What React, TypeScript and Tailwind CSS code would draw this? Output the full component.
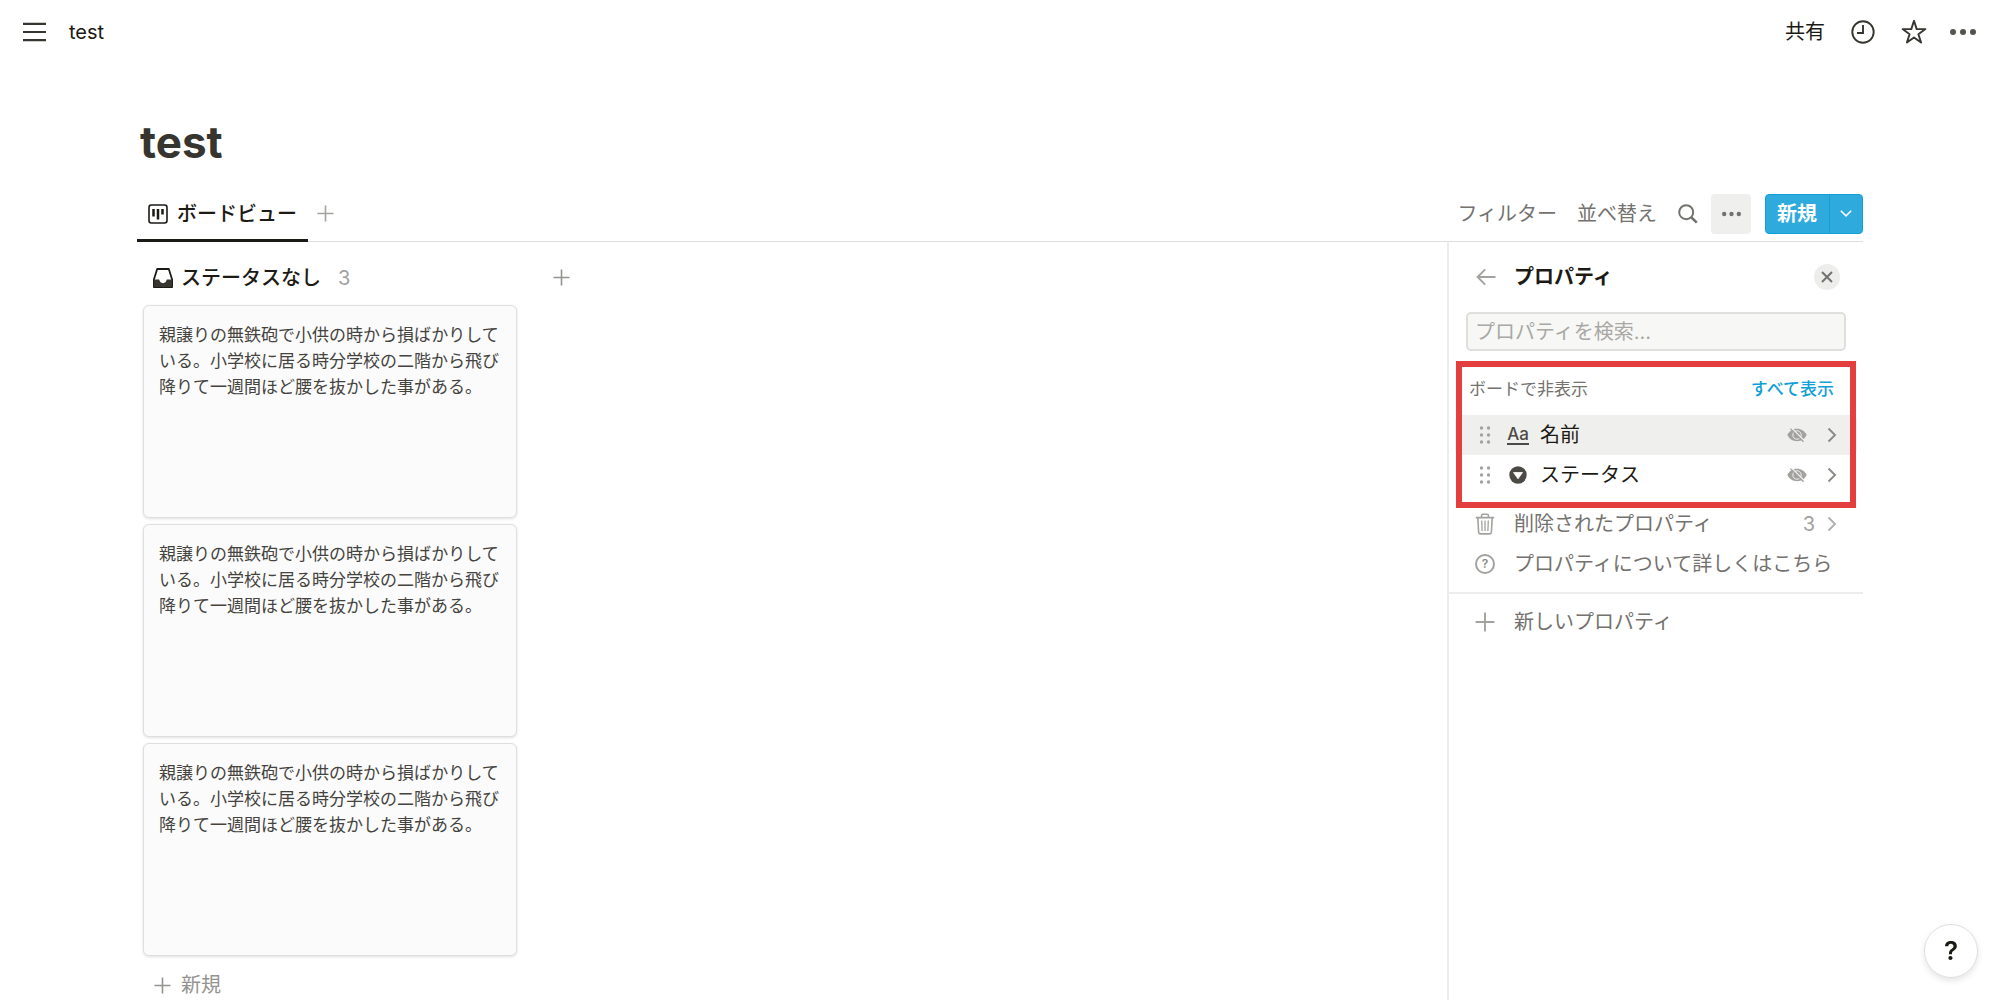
import { useState, type ReactNode } from "react";

const CARD_TEXT =
  "親譲りの無鉄砲で小供の時から損ばかりしている。小学校に居る時分学校の二階から飛び降りて一週間ほど腰を抜かした事がある。";

const cards = [
  { id: "card-1", text: CARD_TEXT },
  { id: "card-2", text: CARD_TEXT },
  { id: "card-3", text: CARD_TEXT },
];

type IconProps = { className?: string };

function PlusIcon({ className }: IconProps) {
  return (
    <svg className={className} viewBox="0 0 18 18" fill="none" stroke="currentColor" strokeWidth="1.7">
      <path d="M9 .5v17M.5 9h17" />
    </svg>
  );
}

function ChevronIcon({ className }: IconProps) {
  return (
    <svg className={className} viewBox="0 0 10 16" fill="none" stroke="currentColor" strokeWidth="1.9">
      <path d="m1.5 1.5 6.5 6.5-6.5 6.5" />
    </svg>
  );
}

function MenuIcon() {
  return (
    <svg className="h-6 w-6" viewBox="0 0 24 24" fill="none" stroke="currentColor" strokeWidth="2.2">
      <path d="M1 3.800h23M1 12h23M1 20.200h23" />
    </svg>
  );
}

function ClockIcon() {
  return (
    <svg className="h-6 w-6" viewBox="0 0 24 24" fill="none" stroke="currentColor" strokeWidth="1.9">
      <circle cx="12" cy="12" r="10.7" />
      <path d="M12 5v8H6" />
    </svg>
  );
}

function StarIcon() {
  return (
    <svg className="h-[26px] w-[26px]" viewBox="0 0 26 26" fill="none" stroke="currentColor" strokeWidth="1.9" strokeLinejoin="round">
      <path d="m13 1.8 2.7 8.3h8.7l-7 5.1 2.7 8.3-7.1-5.1-7.1 5.1 2.7-8.3-7-5.1h8.7z" />
    </svg>
  );
}

function DotsIcon({ className }: IconProps) {
  return (
    <svg className={className} viewBox="0 0 26 6" fill="currentColor">
      <circle cx="3" cy="3" r="3" />
      <circle cx="13" cy="3" r="3" />
      <circle cx="23" cy="3" r="3" />
    </svg>
  );
}

function BoardIcon() {
  return (
    <svg className="h-5 w-5" viewBox="0 0 20 20" fill="none" stroke="currentColor">
      <rect x="1" y="1" width="18" height="18" rx="2.4" strokeWidth="1.6" />
      <path d="M5.5 5v7.6M10 5v10.600M14.500 5v5.400" strokeWidth="2.500" />
    </svg>
  );
}

function SearchIcon() {
  return (
    <svg className="h-5 w-5" viewBox="0 0 20 20" fill="none" stroke="currentColor" strokeWidth="2">
      <circle cx="8.2" cy="8.2" r="7" />
      <path d="m13.2 13.2 5.6 5.4" strokeWidth="2.6" />
    </svg>
  );
}

function InboxIcon() {
  return (
    <svg className="h-5 w-5" viewBox="0 0 20 20">
      <path
        d="M4.2 1h11.6l3.3 10.4v7.7H.9v-7.7z"
        fill="none"
        stroke="#1c1a14"
        strokeWidth="1.8"
        strokeLinejoin="round"
      />
      <path d="M.9 11.6h5.3c.5 2.3 1.9 3.6 3.8 3.6s3.3-1.3 3.8-3.6h5.3v7.5H.9z" fill="#37352f" />
    </svg>
  );
}

function BackIcon() {
  return (
    <svg className="h-[18px] w-5" viewBox="0 0 20 18" fill="none" stroke="currentColor" strokeWidth="1.9">
      <path d="M1.800 9H19.500M9.200 1.400 1.600 9l7.600 7.600" />
    </svg>
  );
}

function GripIcon() {
  return (
    <svg className="h-[18px] w-3" viewBox="0 0 12 18" fill="currentColor">
      <circle cx="2.5" cy="2" r="1.7" />
      <circle cx="9.5" cy="2" r="1.7" />
      <circle cx="2.5" cy="9" r="1.7" />
      <circle cx="9.5" cy="9" r="1.7" />
      <circle cx="2.5" cy="16" r="1.7" />
      <circle cx="9.5" cy="16" r="1.7" />
    </svg>
  );
}

function SelectIcon() {
  return (
    <svg className="h-[18px] w-[18px]" viewBox="0 0 18 18">
      <circle cx="9" cy="9" r="8.7" fill="#4c4a45" />
      <path d="M4.500 6.500h9L9 12.800z" fill="#fff" stroke="#fff" strokeWidth=".8" strokeLinejoin="round" />
    </svg>
  );
}

function EyeOffIcon() {
  return (
    <svg className="h-4 w-5" viewBox="0 0 20 16" fill="none">
      <path d="M.3 8C2.2 4.200 5.600 1.800 10 1.800S17.800 4.200 19.700 8C17.800 11.800 14.400 14.200 10 14.200S2.200 11.800.3 8z" fill="#a3a29f" />
      <circle cx="10" cy="8" r="4.200" stroke="#efefee" strokeWidth="1" />
      <path d="M4.400.9 17.600 14" stroke="#f6f6f5" strokeWidth="1.300" />
      <path d="M3.400 1.600 16.600 14.800" stroke="#a3a29f" strokeWidth="1.300" />
    </svg>
  );
}

function TrashIcon() {
  return (
    <svg className="h-[22px] w-5" viewBox="0 0 20 22" fill="none" stroke="currentColor" strokeWidth="1.600">
      <path d="M.8 4.600h18.400M6.500 4.400V2.700c0-.9.6-1.500 1.500-1.500h4c.9 0 1.500.6 1.500 1.500v1.700M2.800 4.800l.8 14.200c.1 1.200.8 1.900 2 1.900h8.800c1.200 0 1.900-.7 2-1.900l.8-14.200" />
      <path d="M6.700 7.500l.4 10.500M10 7.500V18M13.300 7.500l-.4 10.500" strokeWidth="1.300" />
    </svg>
  );
}

function HelpIcon() {
  return (
    <span className="flex h-5 w-5 items-center justify-center rounded-full border-2 border-[#a3a29f] text-xs font-semibold text-[#8b8a86]">
      ?
    </span>
  );
}

type PropertyRowProps = {
  icon: ReactNode;
  name: string;
  active?: boolean;
};

function PropertyRow({ icon, name, active }: PropertyRowProps) {
  return (
    <li className={`flex h-10 items-center rounded-md pr-5 pl-6 ${active ? "bg-[#efefee]" : ""}`}>
      <span className="cursor-grab text-[#a3a29f]">
        <GripIcon />
      </span>
      <span className="ml-[15px] flex w-6 justify-center">{icon}</span>
      <span className="ml-[10px] flex-1 text-[#1c1a14]">{name}</span>
      <button type="button" aria-label={`${name}を表示`}>
        <EyeOffIcon />
      </button>
      <button type="button" className="ml-5 text-[#8b8a86]" aria-label={`${name}を編集`}>
        <ChevronIcon className="h-4 w-[10px]" />
      </button>
    </li>
  );
}

function PropertiesPanel() {
  const [query, setQuery] = useState("");

  return (
    <aside className="w-[416px] shrink-0 border-l-2 border-[#ededec]">
      <div className="flex h-[70px] items-center pr-[23px] pl-[27px]">
        <button type="button" className="text-[#a3a29f]" aria-label="戻る">
          <BackIcon />
        </button>
        <h2 className="ml-[18px] flex-1 font-semibold text-[#1c1a14]">プロパティ</h2>
        <button
          type="button"
          className="flex h-[26px] w-[26px] items-center justify-center rounded-full bg-[#ededec] text-[#73726e]"
          aria-label="閉じる"
        >
          <svg className="h-3 w-3" viewBox="0 0 12 12" fill="none" stroke="currentColor" strokeWidth="2">
            <path d="m1 1 10 10M11 1 1 11" />
          </svg>
        </button>
      </div>

      <div className="pr-[17px] pl-[17px]">
        <input
          className="block h-[39px] w-full rounded-[5px] border-2 border-[#dfdfdd] bg-[#f7f7f5] px-[7px] placeholder:text-[#a9a8a5] focus:outline-none"
          type="text"
          aria-label="プロパティを検索"
          placeholder="プロパティを検索..."
          value={query}
          onChange={(event) => setQuery(event.target.value)}
        />
      </div>

      <section className="relative px-[6px] pt-[10px]">
        <div className="flex h-[54px] items-center justify-between pt-[2px] pr-[23px] pl-[14px] text-[17px]">
          <h3 className="text-[#73726e]">ボードで非表示</h3>
          <button type="button" className="font-medium text-[#109fd6]">
            すべて表示
          </button>
        </div>
        <ul>
          <PropertyRow
            active
            name="名前"
            icon={
              <span className="border-b-2 border-[#4c4a45] text-[17px] leading-[18px] font-medium text-[#4c4a45]">
                Aa
              </span>
            }
          />
          <PropertyRow name="ステータス" icon={<SelectIcon />} />
        </ul>
        <div className="pointer-events-none absolute inset-x-[7px] top-[10px] h-[147px] border-[6px] border-[#e53e3e]" />
      </section>

      <div className="mt-[9px] border-b-2 border-[#ededec] pb-2 text-[#73726e]">
        <button type="button" className="flex h-10 w-full items-center pr-[26px] pl-[26px] text-left">
          <span className="text-[#a3a29f]">
            <TrashIcon />
          </span>
          <span className="ml-[19px] flex-1">削除されたプロパティ</span>
          <span className="text-[#a3a29f]">3</span>
          <ChevronIcon className="ml-3 h-4 w-[10px] text-[#b0afac]" />
        </button>
        <a href="#help" className="flex h-10 items-center pl-[26px]">
          <HelpIcon />
          <span className="ml-[19px] whitespace-nowrap">プロパティについて詳しくはこちら</span>
        </a>
      </div>

      <button type="button" className="mt-2 flex h-10 w-full items-center pl-[26px] text-left text-[#73726e]">
        <PlusIcon className="h-5 w-5 text-[#a3a29f]" />
        <span className="ml-[19px]">新しいプロパティ</span>
      </button>
    </aside>
  );
}

function BoardColumn() {
  return (
    <section className="w-[374px]">
      <div className="flex h-[63px] items-center pt-2 pl-[10px]">
        <InboxIcon />
        <h2 className="ml-2 font-medium text-[#1c1a14]">ステータスなし</h2>
        <span className="ml-[17px] text-[#a3a29f]">3</span>
      </div>
      <ul className="flex flex-col gap-[6px]">
        {cards.map((card) => (
          <li
            key={card.id}
            className="h-[213px] rounded-md border border-[#dfdfdd] bg-[#fbfbfb] px-[15px] py-4 text-[17px] leading-[26px] text-[#45433e] shadow-[0_1px_3px_#0000001f]"
          >
            {card.text}
          </li>
        ))}
      </ul>
      <button type="button" className="mt-[9px] flex h-10 items-center pl-[11px] text-[#94938f]">
        <PlusIcon className="h-[17px] w-[17px]" />
        <span className="ml-[10px]">新規</span>
      </button>
    </section>
  );
}

export default function App() {
  return (
    <div className="flex h-screen flex-col overflow-hidden bg-white font-['Inter','Noto_Sans_CJK_JP',sans-serif] text-xl leading-7 text-[#37352f]">
      <header className="flex h-16 shrink-0 items-center pr-6 pl-[22px]">
        <button type="button" aria-label="メニュー">
          <MenuIcon />
        </button>
        <a href="#test" className="ml-[23px] text-[#1c1a14]">
          test
        </a>
        <div className="ml-auto flex items-center">
          <button type="button" className="text-[#1c1a14]">
            共有
          </button>
          <button type="button" className="ml-[26px]" aria-label="更新履歴">
            <ClockIcon />
          </button>
          <button type="button" className="ml-[26px]" aria-label="お気に入り">
            <StarIcon />
          </button>
          <button type="button" className="ml-[23px] text-[#55534e]" aria-label="その他">
            <DotsIcon className="h-6 w-[26px]" />
          </button>
        </div>
      </header>

      <main className="flex min-h-0 flex-1 flex-col px-[137px]">
        <h1 className="mt-[50px] pl-[3px] text-[44px] leading-[56px] font-bold">test</h1>

        <div className="mt-4 flex h-14 shrink-0 justify-between border-b border-[#dededc]">
          <div className="flex">
            <button
              type="button"
              className="-mb-px flex items-center border-b-[3px] border-[#1c1a14] px-[11px] pt-[2px] font-medium text-[#1c1a14]"
            >
              <BoardIcon />
              <span className="ml-[9px]">ボードビュー</span>
            </button>
            <button type="button" className="ml-[9px] text-[#a3a29f]" aria-label="ビューを追加">
              <PlusIcon className="h-[17px] w-[17px]" />
            </button>
          </div>

          <div className="flex items-center text-[#73726e]">
            <button type="button">フィルター</button>
            <button type="button" className="ml-5">
              並べ替え
            </button>
            <button type="button" className="ml-[21px]" aria-label="検索">
              <SearchIcon />
            </button>
            <button
              type="button"
              className="ml-[13px] flex h-10 w-10 items-center justify-center rounded-[4px] bg-[#efefee]"
              aria-label="ビューの設定"
            >
              <DotsIcon className="h-[18px] w-[19px]" />
            </button>
            <div className="ml-[14px] flex h-10 rounded-[4px] border border-[#109fd6] bg-[#2eaadc] text-white">
              <button type="button" className="border-r border-[#109fd6] pr-3 pl-[11px] font-semibold">
                新規
              </button>
              <button type="button" className="flex w-8 items-center justify-center" aria-label="新規メニュー">
                <ChevronIcon className="h-[13px] w-2 rotate-90" />
              </button>
            </div>
          </div>
        </div>

        <div className="flex min-h-0 flex-1">
          <div className="flex flex-1 items-start pl-[6px]">
            <BoardColumn />
            <button type="button" className="mt-2 ml-9 flex h-[55px] items-center text-[#94938f]" aria-label="グループを追加">
              <PlusIcon className="h-[17px] w-[17px]" />
            </button>
          </div>
          <PropertiesPanel />
        </div>
      </main>

      <button
        type="button"
        className="fixed right-[22px] bottom-[22px] flex h-[54px] w-[54px] items-center justify-center rounded-full border border-[#dfdfdd] bg-white text-[26px] font-semibold text-[#1c1a14] shadow-[0_3px_6px_#0000001a]"
        aria-label="ヘルプ"
      >
        ?
      </button>
    </div>
  );
}
